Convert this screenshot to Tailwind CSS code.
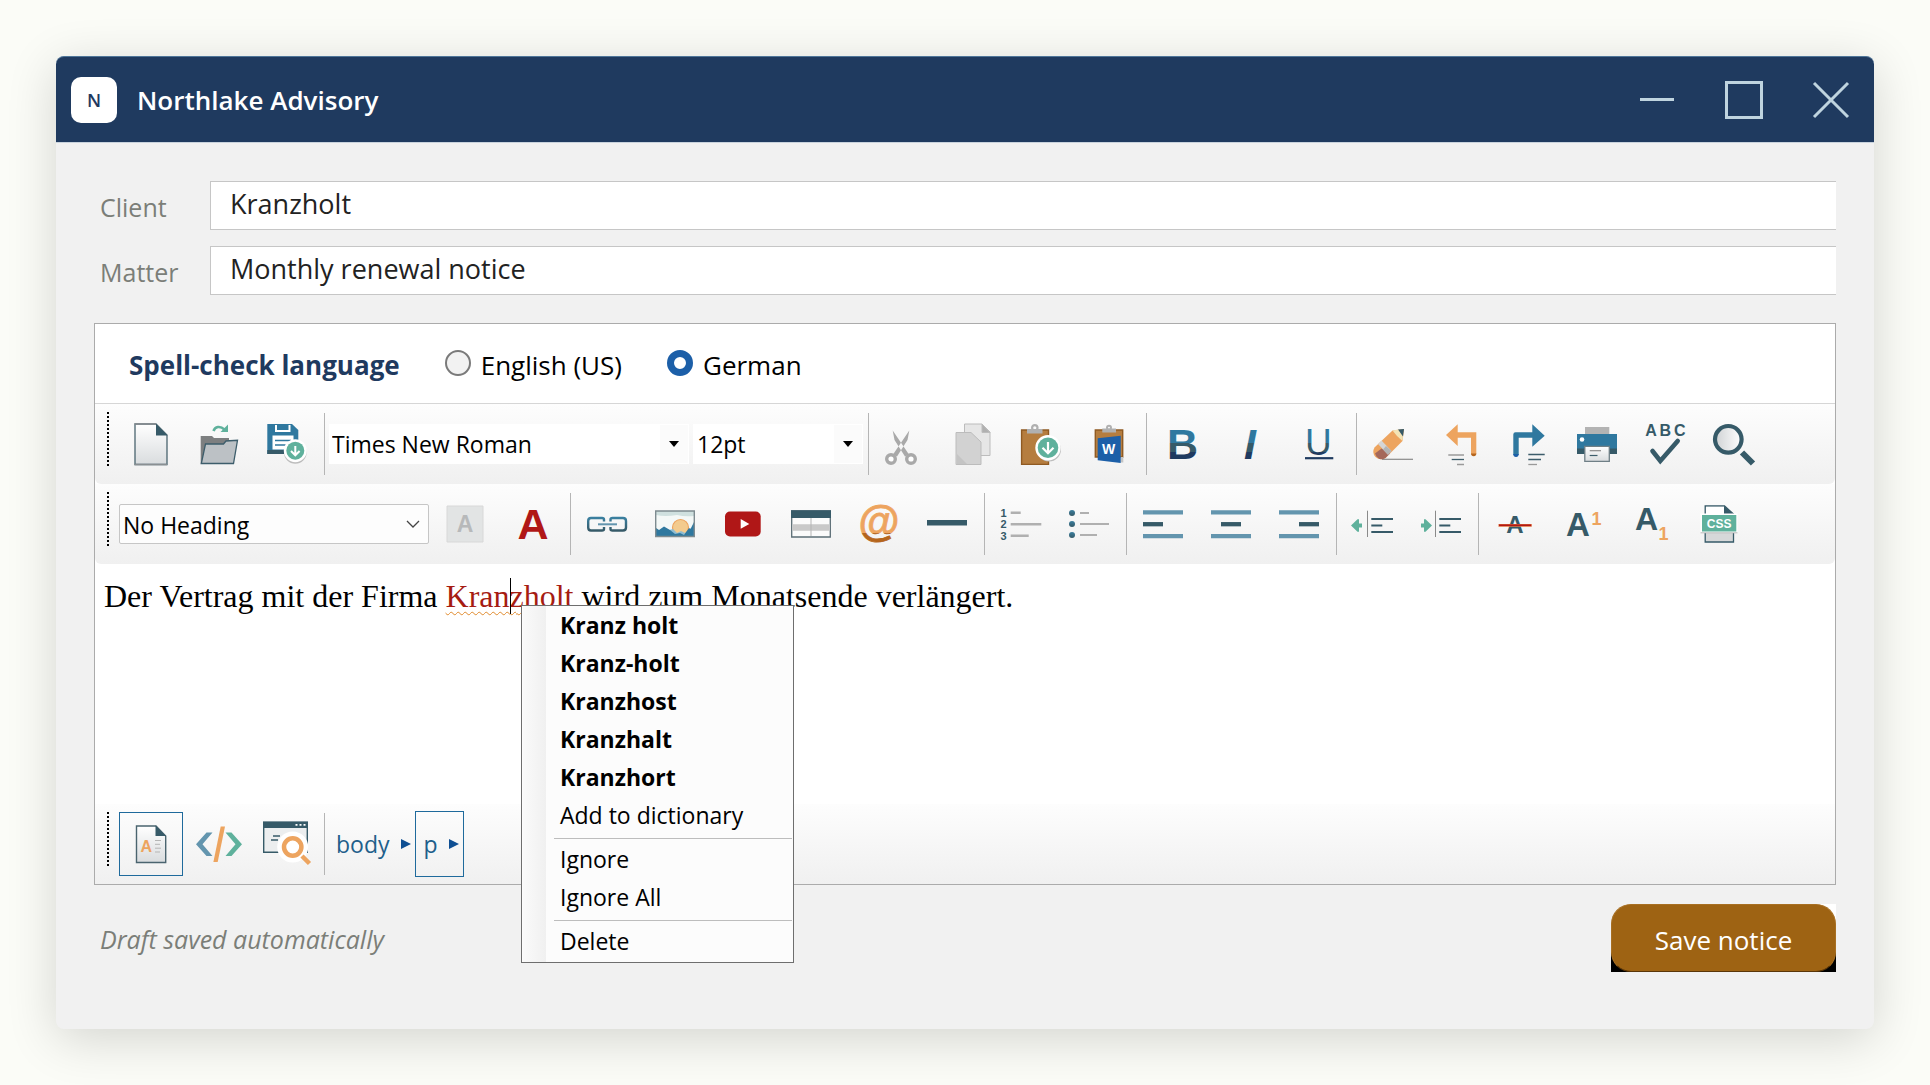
<!DOCTYPE html>
<html lang="en">

<head>
    <meta charset="UTF-8">
    <meta name="viewport" content="width=device-width, initial-scale=1.0">
    <title>Northlake Advisory - Monthly renewal notice</title>
    <script src="https://cdn.jsdelivr.net/npm/@tailwindcss/browser@4"></script>
</head>

<body class="bg-[#fbfcf7] min-h-screen p-14 flex flex-col font-['Open_Sans','Noto_Sans',sans-serif] text-black">

    <!-- Shared gradients -->
    <svg class="absolute size-0" aria-hidden="true">
        <defs>
            <linearGradient id="letter" gradientUnits="userSpaceOnUse" x1="0" y1="5" x2="0" y2="35">
                <stop offset=".46" stop-color="#2f789f" />
                <stop offset=".46" stop-color="#365a68" />
                <stop offset=".77" stop-color="#365a68" />
                <stop offset=".77" stop-color="#1f3a5f" />
            </linearGradient>
            <linearGradient id="paper" x1="0" y1="0" x2="0" y2="1">
                <stop offset="0" stop-color="#fff" />
                <stop offset="1" stop-color="#d9dcde" />
            </linearGradient>
            <linearGradient id="blue" x1="0" y1="0" x2="0" y2="1">
                <stop offset="0" stop-color="#3a7f9f" />
                <stop offset="1" stop-color="#365a68" />
            </linearGradient>
            <linearGradient id="glass" x1="0" y1="0" x2="1" y2="0">
                <stop offset="0" stop-color="#cfd2d4" />
                <stop offset="1" stop-color="#fff" />
            </linearGradient>
            <linearGradient id="at" gradientUnits="userSpaceOnUse" x1="0" y1="0" x2="0" y2="40">
                <stop offset=".72" stop-color="#eda45f" />
                <stop offset=".72" stop-color="#b5651d" />
            </linearGradient>
        </defs>
    </svg>

    <div class="flex-1 flex flex-col bg-[#f1f1f1] rounded-lg shadow-[0_10px_50px_rgba(0,0,0,0.16)]">
        <header class="flex items-center h-[87px] shrink-0 pl-[15px] bg-[#1f3a5f] rounded-t-lg border-t border-[#4f7699] border-b border-b-[#c9d3dd]">
            <span class="flex items-center justify-center size-[46px] rounded-[10px] bg-white text-[#1f3a5f] text-lg font-semibold">N</span>
            <h1 class="ml-5 flex-1 text-white text-[26px] leading-9 font-semibold">Northlake Advisory</h1>
            <button type="button" aria-label="Minimize" class="w-[87px] h-full flex items-center justify-center">
                <svg class="size-10" viewBox="0 0 40 40" stroke="#bfd4df" stroke-width="3"><path d="M3 19.500H37" /></svg>
            </button>
            <button type="button" aria-label="Maximize" class="w-[87px] h-full flex items-center justify-center">
                <svg class="size-10" viewBox="0 0 40 40" fill="none" stroke="#bfd4df" stroke-width="3"><path d="M2.500 2.500H37.500V37.500H2.500z" /></svg>
            </button>
            <button type="button" aria-label="Close" class="w-[87px] h-full flex items-center justify-center">
                <svg class="size-10" viewBox="0 0 40 40" stroke="#bfd4df" stroke-width="3"><path d="M3 3L37 37M37 3L3 37" /></svg>
            </button>
        </header>

        <main class="flex-1 flex flex-col px-[38px] pt-[38px] pb-[57px]">
            <!-- Client and matter -->
            <div class="flex items-center mb-4">
                <label for="client" class="w-[116px] pl-1.5 pt-0.5 text-[25px] leading-8 text-[#7b7e78]">Client</label>
                <input id="client" type="text" value="Kranzholt"
                    class="flex-1 h-[49px] pl-[19px] pb-1 bg-white border border-r-0 border-[#c6c6c6] text-[27px] text-[#222] outline-none">
            </div>
            <div class="flex items-center mb-7">
                <label for="matter" class="w-[116px] pl-1.5 pt-0.5 text-[25px] leading-8 text-[#7b7e78]">Matter</label>
                <input id="matter" type="text" value="Monthly renewal notice"
                    class="flex-1 h-[49px] pl-[19px] pb-1 bg-white border border-r-0 border-[#c6c6c6] text-[27px] text-[#222] outline-none">
            </div>

            <!-- Editor -->
            <section class="flex-1 flex flex-col bg-white border border-[#ababab]">
                <div role="radiogroup" aria-labelledby="language-title" class="flex items-center h-20 shrink-0 pl-[34px] pt-0.5 border-b border-[#d6d6d6] text-[26px] leading-8">
                    <span id="language-title" class="text-[#1f3a5f] font-bold">Spell-check language</span>
                    <label class="flex items-center ml-[45px]">
                        <input type="radio" name="language" class="appearance-none size-[26px] mr-2.5 mb-1 rounded-full border-2 border-[#7a7a7a] bg-[#f2f2f2] checked:border-7 checked:border-[#1c5fa8] checked:bg-white">
                        English (US)
                    </label>
                    <label class="flex items-center ml-[45px]">
                        <input type="radio" name="language" checked class="appearance-none size-[26px] mr-2.5 mb-1 rounded-full border-2 border-[#7a7a7a] bg-[#f2f2f2] checked:border-7 checked:border-[#1c5fa8] checked:bg-white">
                        German
                    </label>
                </div>

                <!-- Toolbar: file, font, clipboard, style -->
                <div role="toolbar" class="flex items-center h-20 shrink-0 pl-3 rounded-b-md bg-linear-to-b from-[#fdfdfd] to-[#f0f0f0]">
                    <span class="self-start mt-2 mr-[7px] w-[2px] h-[54px] bg-[repeating-linear-gradient(#000_0_2px,transparent_2px_4px)]"></span>
                    <button type="button" title="New" class="w-[68px] h-16 flex items-center justify-center">
                        <svg class="size-10 overflow-visible" viewBox="0 0 40 40">
                            <path d="M5 0H26L37 11V40.500H5z" fill="url(#paper)" stroke="#4a646f" stroke-width="1.300" />
                            <path d="M4.500 0H26M4.500 40.500H37" stroke="#8a8f92" stroke-width="1.500" />
                            <path d="M26 0V11.500H37.500z" fill="#365a68" />
                        </svg>
                    </button>
                    <button type="button" title="Open" class="w-[68px] h-16 flex items-center justify-center">
                        <svg class="size-10 overflow-visible" viewBox="0 0 40 40">
                            <path d="M2.700 12H14L16 14H31V39.700H2.700z" fill="#7d7f80" />
                            <path d="M7.500 20H25.500L28 17L39.500 16.300L35.500 39.500H3.300z" fill="#bcc1c5" stroke="#3d5d6b" stroke-width="1.300" />
                            <path d="M15.500 7C17 2.500 22 1.500 26.500 5.500" fill="none" stroke="#5fb19c" stroke-width="2.600" />
                            <path d="M30 .5V8H22.500z" fill="#5fb19c" />
                        </svg>
                    </button>
                    <button type="button" title="Save" class="w-[68px] h-16 flex items-center justify-center">
                        <svg class="size-10 overflow-visible" viewBox="0 0 40 40">
                            <path d="M1.300 0H26L32.300 6V30H1.300z" fill="#2f789f" />
                            <path d="M1.300 26H32.300V30H1.300z" fill="#365a68" />
                            <path d="M10 1V7H23.500V1" fill="none" stroke="#fff" stroke-width="2" />
                            <rect x="6.500" y="11.500" width="21" height="14" fill="#fff" />
                            <path d="M9 16.500H25M9 21H20" stroke="#2f789f" stroke-width="1.300" />
                            <circle cx="29.300" cy="28.500" r="11.300" fill="#bdbdbd" />
                            <circle cx="29.300" cy="26.700" r="11.500" fill="#fff" />
                            <circle cx="29.300" cy="26.700" r="9" fill="#5fb19c" />
                            <path d="M29.300 22V31M25 27L29.300 31.300L33.600 27" fill="none" stroke="#fff" stroke-width="2" />
                        </svg>
                    </button>
                    <span class="w-px h-[62px] ml-[4px] mr-1 bg-[#b5b5b5]"></span>
                    <div class="relative w-[360px]">
                        <select aria-label="Font name" class="appearance-none w-full h-10 pl-[3px] bg-white text-[23px] outline-none">
                            <option>Times New Roman</option>
                        </select>
                        <span class="absolute right-0 top-0 h-10 w-[30px] border border-white bg-[#fbfbfb] flex items-center justify-center pointer-events-none">
                            <svg class="w-[10px] h-[6px]" viewBox="0 0 10 6"><path d="M0 0H10L5 6z" /></svg>
                        </span>
                    </div>
                    <div class="relative w-[170px] ml-1">
                        <select aria-label="Font size" class="appearance-none w-full h-10 pl-[4px] bg-white text-[23px] outline-none">
                            <option>12pt</option>
                        </select>
                        <span class="absolute right-0 top-0 h-10 w-[30px] border border-white bg-[#fbfbfb] flex items-center justify-center pointer-events-none">
                            <svg class="w-[10px] h-[6px]" viewBox="0 0 10 6"><path d="M0 0H10L5 6z" /></svg>
                        </span>
                    </div>
                    <span class="w-px h-[62px] ml-[5px] mr-[2px] bg-[#b5b5b5]"></span>
                    <button type="button" title="Cut" class="w-[68px] h-16 flex items-center justify-center">
                        <svg class="size-10 overflow-visible" viewBox="0 0 40 40" fill="none" stroke="#a9a9a9">
                            <path d="M7.700 6.500L9.500 16L20 32.500L24 30.500zM24.300 6.500L22.500 16L12 32.500L8 30.500z" fill="#a9a9a9" stroke="none" />
                            <circle cx="6" cy="35" r="4.300" stroke-width="3.400" fill="#fff" />
                            <circle cx="26" cy="35" r="4.300" stroke-width="3.400" fill="#fff" />
                        </svg>
                    </button>
                    <button type="button" title="Copy" class="w-[68px] h-16 flex items-center justify-center">
                        <svg class="size-10 overflow-visible" viewBox="0 0 40 40" stroke="#bcbcbc">
                            <path d="M11.500 0H29L37 8V31.500H11.500z" fill="#e6e6e6" />
                            <path d="M29 0V8.500H37z" fill="#b0b0b0" />
                            <path d="M3 8.500H18L28 18V40.500H3z" fill="#d2d2d2" />
                            <path d="M4 30L14 40H4z" fill="#c4c4c4" stroke="none" />
                        </svg>
                    </button>
                    <button type="button" title="Paste" class="w-[68px] h-16 flex items-center justify-center">
                        <svg class="size-10 overflow-visible" viewBox="0 0 40 40">
                            <path d="M.6 6H27.500V40.400H.6z" fill="#b57d3f" stroke="#8f5a22" stroke-width="1.400" />
                            <circle cx="13.800" cy="3.800" r="2.700" fill="none" stroke="#b0b0b0" stroke-width="2.200" />
                            <path d="M6 5H21.500V9.500H6z" fill="#b0b0b0" />
                            <circle cx="28" cy="25.500" r="12" fill="#bdbdbd" />
                            <circle cx="27" cy="23.700" r="12.700" fill="#fff" />
                            <circle cx="27" cy="23.700" r="10.300" fill="#5fb19c" />
                            <path d="M27 18V29M21.500 23.800L27 29.200L32.500 23.800" fill="none" stroke="#fff" stroke-width="2.200" />
                        </svg>
                    </button>
                    <button type="button" title="Paste from Word" class="w-[68px] h-16 flex items-center justify-center">
                        <svg class="size-10 overflow-visible" viewBox="0 0 40 40">
                            <path d="M6.300 6H33.700V33H6.300z" fill="#b57d3f" stroke="#8f5a22" stroke-width="1.400" />
                            <circle cx="20" cy="3.800" r="2" fill="none" stroke="#b0b0b0" stroke-width="2" />
                            <path d="M13.300 4.500H27V8.500H13.300z" fill="#b0b0b0" />
                            <path d="M31.500 33H34.300V38.500H31.500z" fill="#c4c4c4" />
                            <path d="M8.700 14.300L31.700 11.700V39L8.700 36.300z" fill="#1c5fa8" />
                            <text x="19.500" y="30" text-anchor="middle" font-family="Liberation Sans" font-weight="700" font-size="14" fill="#fff">W</text>
                        </svg>
                    </button>
                    <span class="w-px h-[62px] ml-[3px] mr-[2px] bg-[#b5b5b5]"></span>
                    <button type="button" title="Bold" class="w-[68px] h-16 flex items-center justify-center">
                        <svg class="size-10 overflow-visible" viewBox="0 0 40 40">
                            <text x="4" y="35" font-family="Liberation Sans" font-weight="700" font-size="43" fill="url(#letter)">B</text>
                        </svg>
                    </button>
                    <button type="button" title="Italic" class="w-[68px] h-16 flex items-center justify-center">
                        <svg class="size-10 overflow-visible" viewBox="0 0 40 40">
                            <text x="13" y="35" font-family="Liberation Sans" font-weight="700" font-style="italic" font-size="43" fill="url(#letter)">I</text>
                        </svg>
                    </button>
                    <button type="button" title="Underline" class="w-[68px] h-16 flex items-center justify-center">
                        <svg class="size-10 overflow-visible" viewBox="0 0 40 40">
                            <text x="6" y="31" font-family="Liberation Sans" font-size="37" fill="url(#letter)">U</text>
                            <path d="M6 34.200H34.300" stroke="#1f3a5f" stroke-width="2.200" />
                        </svg>
                    </button>
                    <span class="w-px h-[62px] ml-[3px] mr-[2px] bg-[#b5b5b5]"></span>
                    <button type="button" title="Clear formatting" class="w-[68px] h-16 flex items-center justify-center">
                        <svg class="size-10 overflow-visible" viewBox="0 0 40 40">
                            <path d="M9 35.300H40" stroke="#8a8a8a" stroke-width="1.200" />
                            <path d="M1.500 23.500L19.500 6.500L31 5L29.500 17L12.500 34Q7 37 2.500 33Q-1.500 28.500 1.500 23.500z" fill="#eda45f" />
                            <path d="M3.500 32.500Q7 37 12.500 34L17 29.500L8.500 24.500L2 29.500z" fill="#a5685a" />
                            <path d="M5 20L8.500 16.500L18.500 27L15 30.800z" fill="#d5d5d5" />
                            <path d="M10 25.500L13 22L18.500 27L15 30.800z" fill="#b3b3b3" />
                            <path d="M19.500 6.500L25.500 5.500L30 11.500L29.500 17L24 12z" fill="#f3e3b5" />
                            <path d="M25 5.500L31 5L30 12.500z" fill="#365a68" />
                        </svg>
                    </button>
                    <button type="button" title="Undo" class="w-[68px] h-16 flex items-center justify-center">
                        <svg class="size-10 overflow-visible" viewBox="0 0 40 40">
                            <path d="M5 11L16.700 .3V8.300H35.300V30H30V13.700H16.700V22z" fill="#eda45f" />
                            <path d="M30 29.500H35.300Q35.300 32.300 32.700 32.300T30 29.500" fill="#b5651d" />
                            <path d="M7.300 31H23M16 40.500H23" stroke="#9a9a9a" stroke-width="1.300" />
                            <path d="M10.700 35.500H23" stroke="#3d5d6b" stroke-width="1.300" />
                        </svg>
                    </button>
                    <button type="button" title="Redo" class="w-[68px] h-16 flex items-center justify-center">
                        <svg class="size-10 overflow-visible" viewBox="0 0 40 40">
                            <path d="M35.700 11.700L23.300 .3V8.300H6.500Q4.300 8.300 4.300 10.500V31H9.700V13.700H23.300V22.700z" fill="#2f789f" />
                            <path d="M4.300 30H9.700Q9.700 33 7 33T4.300 30" fill="#1c5fa8" />
                            <path d="M19.300 30.500H35.700M19.300 35.500H32" stroke="#3d5d6b" stroke-width="1.300" />
                            <path d="M19.300 40.500H28" stroke="#9a9a9a" stroke-width="1.300" />
                        </svg>
                    </button>
                    <button type="button" title="Print" class="w-[68px] h-16 flex items-center justify-center">
                        <svg class="size-10 overflow-visible" viewBox="0 0 40 40">
                            <path d="M8 3H32.300V10H8z" fill="#b3b3b3" />
                            <path d="M0 10H40V30H0z" fill="#2f789f" />
                            <path d="M0 24.500H40V30H0z" fill="#365a68" />
                            <circle cx="5" cy="15.500" r="2.300" fill="#fff" />
                            <path d="M7.800 22.300H32.300V37.300H7.800z" fill="url(#paper)" stroke="#6f7f86" stroke-width="1.300" />
                            <path d="M12.700 26.700H24" stroke="#8a8a8a" stroke-width="1.200" />
                            <path d="M12.700 31.500H20.500" stroke="#3d5d6b" stroke-width="1.200" />
                        </svg>
                    </button>
                    <button type="button" title="Check spelling" class="w-[68px] h-16 flex items-center justify-center">
                        <svg class="size-10 overflow-visible" viewBox="0 0 40 40">
                            <g font-family="Liberation Sans" font-weight="700" font-size="16" fill="#365a68">
                                <text x=".2" y="11.500">A</text>
                                <text x="14.500" y="11.500">B</text>
                                <text x="29" y="11.500">C</text>
                            </g>
                            <path d="M7.500 27L15.300 37L32.700 17" fill="none" stroke="#365a68" stroke-width="4.600" stroke-linecap="round" />
                        </svg>
                    </button>
                    <button type="button" title="Find" class="w-[68px] h-16 flex items-center justify-center">
                        <svg class="size-10 overflow-visible" viewBox="0 0 40 40">
                            <circle cx="15.300" cy="15.300" r="13.300" fill="url(#glass)" stroke="#365a68" stroke-width="4.200" />
                            <path d="M29 28.500L40 39.500" stroke="#365a68" stroke-width="6" />
                        </svg>
                    </button>
                </div>

                <!-- Toolbar: headings, inserts, paragraphs -->
                <div role="toolbar" class="flex items-center h-20 shrink-0 pl-3 rounded-b-md bg-linear-to-b from-[#fdfdfd] to-[#f0f0f0]">
                    <span class="self-start mt-2 mr-[10px] w-[2px] h-[54px] bg-[repeating-linear-gradient(#000_0_2px,transparent_2px_4px)]"></span>
                    <div class="relative w-[310px] mr-[2px]">
                        <select aria-label="Heading" class="appearance-none w-full h-10 pl-[3px] pt-[2px] rounded-[2px] bg-[#fdfdfd] border border-[#c6c6c6] text-[23px] outline-none">
                            <option>No Heading</option>
                        </select>
                        <svg class="absolute right-[9px] top-4 w-[14px] h-2 pointer-events-none" viewBox="0 0 14 8" fill="none" stroke="#444" stroke-width="1.300"><path d="M1 1L7 7L13 1" /></svg>
                    </div>
                    <button type="button" title="Highlight" class="w-[68px] h-16 flex items-center justify-center">
                        <svg class="size-10 overflow-visible" viewBox="0 0 40 40">
                            <path d="M2 2H38V38H2z" fill="#e2e4e4" stroke="#d8d8d8" />
                            <text x="20" y="28" text-anchor="middle" font-family="Liberation Sans" font-weight="700" font-size="23" fill="#b7b9ba">A</text>
                        </svg>
                    </button>
                    <button type="button" title="Text color" class="w-[68px] h-16 flex items-center justify-center">
                        <svg class="size-10 overflow-visible" viewBox="0 0 40 40">
                            <text x="20" y="35" text-anchor="middle" font-family="Liberation Sans" font-weight="700" font-size="43" fill="#b01717">A</text>
                        </svg>
                    </button>
                    <span class="w-px h-[62px] ml-[3px] mr-[2px] bg-[#b5b5b5]"></span>
                    <button type="button" title="Link" class="w-[68px] h-16 flex items-center justify-center">
                        <svg class="size-10 overflow-visible" viewBox="0 0 40 40" fill="none" stroke="url(#blue)" stroke-width="2.400">
                            <path d="M17 17.500V15.500Q17 14 15 14H4Q1.200 14 1.200 17V23.500Q1.200 26.500 4 26.500H15Q17 26.500 17 25V23" />
                            <path d="M23.500 17.500V15.500Q23.500 14 25.500 14H36Q39 14 39 17V23.500Q39 26.500 36 26.500H25.500Q23.500 26.500 23.500 25V23" />
                            <path d="M11 19.300H30V21.300H11z" fill="#6395ae" stroke="none" />
                        </svg>
                    </button>
                    <button type="button" title="Image" class="w-[68px] h-16 flex items-center justify-center">
                        <svg class="size-10 overflow-visible" viewBox="0 0 40 40">
                            <path d="M1 7H39V33H1z" fill="#f4f8f7" />
                            <path d="M1 7H39V12Q30 13 22 11Q10 13 1 11z" fill="#cfe0df" />
                            <circle cx="25.500" cy="23.500" r="8" fill="#f3cb8e" stroke="#eda45f" stroke-width="1.200" />
                            <path d="M14 26L18 25L22 29L26 27L30 29L36 24V33H12z" fill="#8fbdd2" />
                            <path d="M1 24L4 26L9 22.500L15 26L20 30L25 29L29 31L34 24L35.500 25L39 18V33H1z" fill="#2f789f" />
                            <path d="M.7 7H39.300V32.500H.7z" fill="none" stroke="#7e8b90" stroke-width="1.400" />
                        </svg>
                    </button>
                    <button type="button" title="Video" class="w-[68px] h-16 flex items-center justify-center">
                        <svg class="size-10 overflow-visible" viewBox="0 0 40 40">
                            <rect x="2" y="7.500" width="35.700" height="25" rx="5" fill="#b01717" />
                            <path d="M17.700 15L26.300 20L17.700 24.700z" fill="#fff" />
                        </svg>
                    </button>
                    <button type="button" title="Table" class="w-[68px] h-16 flex items-center justify-center">
                        <svg class="size-10 overflow-visible" viewBox="0 0 40 40">
                            <path d="M.7 7H39.300V33H.7z" fill="#fbfbfb" stroke="#5b6d75" stroke-width="1.300" />
                            <path d="M0 6.300H40V14H0z" fill="#365a68" />
                            <path d="M1.300 20.300H38.700V26.700H1.300z" fill="#c9c9c9" />
                            <path d="M20 14V32" stroke="#b5b5b5" />
                        </svg>
                    </button>
                    <button type="button" title="Mention" class="w-[68px] h-16 flex items-center justify-center">
                        <svg class="size-10 overflow-visible" viewBox="0 0 40 40">
                            <text x="20" y="31.500" text-anchor="middle" font-family="Liberation Sans" font-weight="700" font-size="42" fill="url(#at)" stroke="url(#at)" stroke-width=".8">@</text>
                        </svg>
                    </button>
                    <button type="button" title="Horizontal line" class="w-[68px] h-16 flex items-center justify-center">
                        <svg class="size-10" viewBox="0 0 40 40"><path d="M0 16H40V21.500H0z" fill="#365a68" /></svg>
                    </button>
                    <span class="w-px h-[62px] ml-[3px] mr-[2px] bg-[#b5b5b5]"></span>
                    <button type="button" title="Numbered list" class="w-[68px] h-16 flex items-center justify-center">
                        <svg class="size-10 overflow-visible" viewBox="0 0 40 40">
                            <g font-family="Liberation Sans" font-weight="700" font-size="11" fill="#365a68">
                                <text x="-.5" y="12.500">1</text>
                                <text x="-.5" y="24">2</text>
                                <text x="-.5" y="35.500">3</text>
                            </g>
                            <path d="M9.700 8.800H19.700M9.700 20.300H40.300M9.700 31.800H27.700" stroke="#b0b0b0" stroke-width="2.500" />
                        </svg>
                    </button>
                    <button type="button" title="Bulleted list" class="w-[68px] h-16 flex items-center justify-center">
                        <svg class="size-10 overflow-visible" viewBox="0 0 40 40">
                            <g fill="url(#blue)"><circle cx="3" cy="9" r="3" /><circle cx="3" cy="20" r="3" /><circle cx="3" cy="31" r="3" /></g>
                            <path d="M11 9H20M11 20H40M11 31H28" stroke="#b0b0b0" stroke-width="2" />
                        </svg>
                    </button>
                    <span class="w-px h-[62px] ml-[3px] mr-[2px] bg-[#b5b5b5]"></span>
                    <button type="button" title="Align left" class="w-[68px] h-16 flex items-center justify-center">
                        <svg class="size-10 overflow-visible" viewBox="0 0 40 40" stroke-width="4.300">
                            <path d="M0 8.300H40M0 32.200H40" stroke="#6395ae" />
                            <path d="M0 20.200H20" stroke="#365a68" />
                        </svg>
                    </button>
                    <button type="button" title="Center" class="w-[68px] h-16 flex items-center justify-center">
                        <svg class="size-10 overflow-visible" viewBox="0 0 40 40" stroke-width="4.300">
                            <path d="M0 8.300H40M0 32.200H40" stroke="#6395ae" />
                            <path d="M10 20.200H30" stroke="#365a68" />
                        </svg>
                    </button>
                    <button type="button" title="Align right" class="w-[68px] h-16 flex items-center justify-center">
                        <svg class="size-10 overflow-visible" viewBox="0 0 40 40" stroke-width="4.300">
                            <path d="M0 8.300H40M0 32.200H40" stroke="#6395ae" />
                            <path d="M20 20.200H40" stroke="#365a68" />
                        </svg>
                    </button>
                    <span class="w-px h-[62px] ml-[3px] mr-[2px] bg-[#b5b5b5]"></span>
                    <button type="button" title="Outdent" class="w-[68px] h-16 flex items-center justify-center">
                        <svg class="size-10 overflow-visible" viewBox="0 0 40 40">
                            <path d="M-2 21.500L4.500 15.300H6V19.500H9V23.500H6V27.700H4.500z" fill="#5fb19c" />
                            <path d="M14.500 6.700V33" stroke="#8a8a8a" stroke-width="1" />
                            <path d="M18.300 15H40M18.300 28H40M18.300 21.500H29.300" stroke="#365a68" stroke-width="2" />
                        </svg>
                    </button>
                    <button type="button" title="Indent" class="w-[68px] h-16 flex items-center justify-center">
                        <svg class="size-10 overflow-visible" viewBox="0 0 40 40">
                            <path d="M11 21.500L4.500 15.300H3V19.500H0V23.500H3V27.700H4.500z" fill="#5fb19c" />
                            <path d="M14.500 6.700V33" stroke="#8a8a8a" stroke-width="1" />
                            <path d="M18.300 15H40M18.300 28H40M18.300 21.500H29.300" stroke="#365a68" stroke-width="2" />
                        </svg>
                    </button>
                    <span class="w-px h-[62px] ml-[3px] mr-[2px] bg-[#b5b5b5]"></span>
                    <button type="button" title="Strikethrough" class="w-[68px] h-16 flex items-center justify-center">
                        <svg class="size-10 overflow-visible" viewBox="0 0 40 40">
                            <text x="20" y="28.500" text-anchor="middle" font-family="Liberation Sans" font-weight="700" font-size="24" fill="#365a68">A</text>
                            <path d="M3.500 21.300H36.700" stroke="#e0703a" stroke-width="2.800" />
                            <path d="M4 21.300H36.200" stroke="#b01717" stroke-width="1.500" />
                        </svg>
                    </button>
                    <button type="button" title="Superscript" class="w-[68px] h-16 flex items-center justify-center">
                        <svg class="size-10 overflow-visible" viewBox="0 0 40 40" font-family="Liberation Sans" font-weight="700">
                            <text x="3" y="32" font-size="33" fill="#365a68">A</text>
                            <text x="28.500" y="21" font-size="18" fill="#eda45f">1</text>
                        </svg>
                    </button>
                    <button type="button" title="Subscript" class="w-[68px] h-16 flex items-center justify-center">
                        <svg class="size-10 overflow-visible" viewBox="0 0 40 40" font-family="Liberation Sans" font-weight="700">
                            <text x="4" y="26" font-size="32" fill="#365a68">A</text>
                            <text x="27.500" y="36" font-size="18" fill="#eda45f">1</text>
                        </svg>
                    </button>
                    <button type="button" title="Style sheet" class="w-[68px] h-16 flex items-center justify-center">
                        <svg class="size-10 overflow-visible" viewBox="0 0 40 40">
                            <path d="M6.200 2H25.500L34.500 10V38H6.200z" fill="#d6d8d9" stroke="#365a68" stroke-width="1.300" />
                            <path d="M7 2.700H25.500V10H7z" fill="#fff" />
                            <path d="M25 1.500V10H34z" fill="#365a68" />
                            <path d="M1.500 9.500H38.500V29H1.500z" fill="#fff" />
                            <path d="M1.500 28.800H38.500" stroke="#b9b9b9" />
                            <path d="M3 11H37.300V27.500H3z" fill="#5fb19c" />
                            <text x="20.200" y="23.500" text-anchor="middle" font-family="Liberation Sans" font-weight="700" font-size="12" fill="#fff">CSS</text>
                        </svg>
                    </button>
                </div>

                <!-- Document -->
                <div class="relative flex-1">
                    <p contenteditable="true" lang="de" spellcheck="false"
                        class="pl-[9px] pt-3 font-['Liberation_Serif','Times_New_Roman',serif] text-[32px] leading-10 outline-none">Der Vertrag mit der Firma <span class="text-[#a61c12] underline decoration-wavy decoration-1 decoration-[#e08a2c] underline-offset-4"><span class="relative">Kran<span class="absolute left-full top-0 w-px h-9 bg-black"></span></span>zholt</span> wird zum Monatsende verlängert.</p>

                    <!-- Spelling menu -->
                    <div role="menu"
                        class="absolute left-[426px] top-[41px] z-10 w-[273px] flex border border-[#6e6e6e] bg-[#fcfcfc] pl-px text-[23px] leading-9">
                        <span class="w-[23px] shrink-0 bg-linear-to-r from-[#fafafa] to-[#f0f0f0]"></span>
                        <div class="flex-1 flex flex-col pl-2 pr-px pb-[2px]">
                            <button type="button" role="menuitem" class="h-[38px] pl-[6px] text-left font-bold hover:bg-[#e5f1fb]">Kranz holt</button>
                            <button type="button" role="menuitem" class="h-[38px] pl-[6px] text-left font-bold hover:bg-[#e5f1fb]">Kranz-holt</button>
                            <button type="button" role="menuitem" class="h-[38px] pl-[6px] text-left font-bold hover:bg-[#e5f1fb]">Kranzhost</button>
                            <button type="button" role="menuitem" class="h-[38px] pl-[6px] text-left font-bold hover:bg-[#e5f1fb]">Kranzhalt</button>
                            <button type="button" role="menuitem" class="h-[38px] pl-[6px] text-left font-bold hover:bg-[#e5f1fb]">Kranzhort</button>
                            <button type="button" role="menuitem" class="h-[38px] pl-[6px] text-left hover:bg-[#e5f1fb]">Add to dictionary</button>
                            <hr class="mt-1 mb-px border-[#bdbdbd]">
                            <button type="button" role="menuitem" class="h-[38px] pl-[6px] text-left hover:bg-[#e5f1fb]">Ignore</button>
                            <button type="button" role="menuitem" class="h-[38px] pl-[6px] text-left hover:bg-[#e5f1fb]">Ignore All</button>
                            <hr class="mt-1 mb-px border-[#bdbdbd]">
                            <button type="button" role="menuitem" class="h-[38px] pl-[6px] text-left hover:bg-[#e5f1fb]">Delete</button>
                        </div>
                    </div>
                </div>

                <!-- View modes and element path -->
                <div role="toolbar" class="flex items-center h-20 shrink-0 pl-3 bg-linear-to-b from-[#fdfdfd] to-[#f0f0f0]">
                    <span class="self-start mt-2 mr-[10px] w-[2px] h-[54px] bg-[repeating-linear-gradient(#000_0_2px,transparent_2px_4px)]"></span>
                    <button type="button" title="Design view" class="size-16 mr-px flex items-center justify-center border border-[#1f6a9c]">
                        <svg class="size-10 overflow-visible" viewBox="0 0 40 40">
                            <path d="M5.500 2H25L34.700 12V38.500H5.500z" fill="url(#paper)" stroke="#4a646f" stroke-width="1.400" />
                            <path d="M24.500 1.500V12H35z" fill="#365a68" />
                            <text x="9.500" y="28" font-family="Liberation Sans" font-weight="700" font-size="16" fill="#eda45f">A</text>
                            <path d="M24 16.500H30M24 20.300H29M24 24.200H30M24 28H29" stroke="#b5b5b5" stroke-width="1" />
                        </svg>
                    </button>
                    <button type="button" title="HTML view" class="w-[68px] h-16 flex items-center justify-center">
                        <svg class="size-10 overflow-visible" viewBox="0 0 40 40">
                            <path d="M14.500 8.500H8.500L-2 20.300L8.500 32H14.500L4.500 20.300z" fill="#6395ae" />
                            <path d="M27.500 8.500H33.500L44 20.300L33.500 32H27.500L37.500 20.300z" fill="#5fb19c" />
                            <path d="M22.700 2.500H27L19.700 38H15.400z" fill="#eda45f" />
                        </svg>
                    </button>
                    <button type="button" title="Preview" class="w-[68px] h-16 flex items-center justify-center">
                        <svg class="size-10 overflow-visible" viewBox="0 0 40 40">
                            <path d="M-2.300 -1.700H41.300V28.300H-2.300z" fill="#eceeef" stroke="#365a68" stroke-width="1.400" />
                            <path d="M-3 -2.300H42V4H-3z" fill="#365a68" />
                            <path d="M29.500 .8H31.500M33.500 .8H35.500M37.500 .8H39.500" stroke="#fff" stroke-width="1.700" />
                            <path d="M7 12H14M5 16H12" stroke="#365a68" stroke-width="1.500" />
                            <circle cx="26.700" cy="23" r="15.500" fill="#fff" />
                            <circle cx="26.700" cy="23" r="8.700" fill="none" stroke="#eda45f" stroke-width="4.500" />
                            <path d="M36 32L43.500 39.500" stroke="#eda45f" stroke-width="4.500" />
                        </svg>
                    </button>
                    <span class="w-px h-[62px] ml-[4px] mr-[11px] bg-[#b5b5b5]"></span>
                    <button type="button" class="flex items-center h-16 text-[23px] text-[#1f5f8b]">body
                        <svg class="ml-[11px] w-[10px] h-[10px]" viewBox="0 0 10 10" fill="#0f4f93"><path d="M0 0L10 5L0 10z" /></svg>
                    </button>
                    <button type="button" class="flex items-center h-[66px] ml-1 px-[4px] pl-2 border border-[#1f6a9c] text-[23px] text-[#1f5f8b]">p
                        <svg class="ml-[11px] w-[10px] h-[10px]" viewBox="0 0 10 10" fill="#0f4f93"><path d="M0 0L10 5L0 10z" /></svg>
                    </button>
                </div>
            </section>

            <footer class="flex items-center justify-between mt-[19px] pl-1.5">
                <p class="pt-0.5 text-[25px] leading-8 italic text-[#7b7e78]">Draft saved automatically</p>
                <div class="bg-[linear-gradient(to_right,#f1f1f1_50%,#fff_50%)]">
                    <div class="bg-[linear-gradient(transparent_60%,#000_60%)]">
                        <button type="submit" class="block w-[225px] h-[68px] pt-1 rounded-[20px] border border-[#a86f22] border-b-[#5a3608] bg-[#9e6313] text-white text-[26px] font-medium">Save notice</button>
                    </div>
                </div>
            </footer>
        </main>
    </div>
</body>

</html>
